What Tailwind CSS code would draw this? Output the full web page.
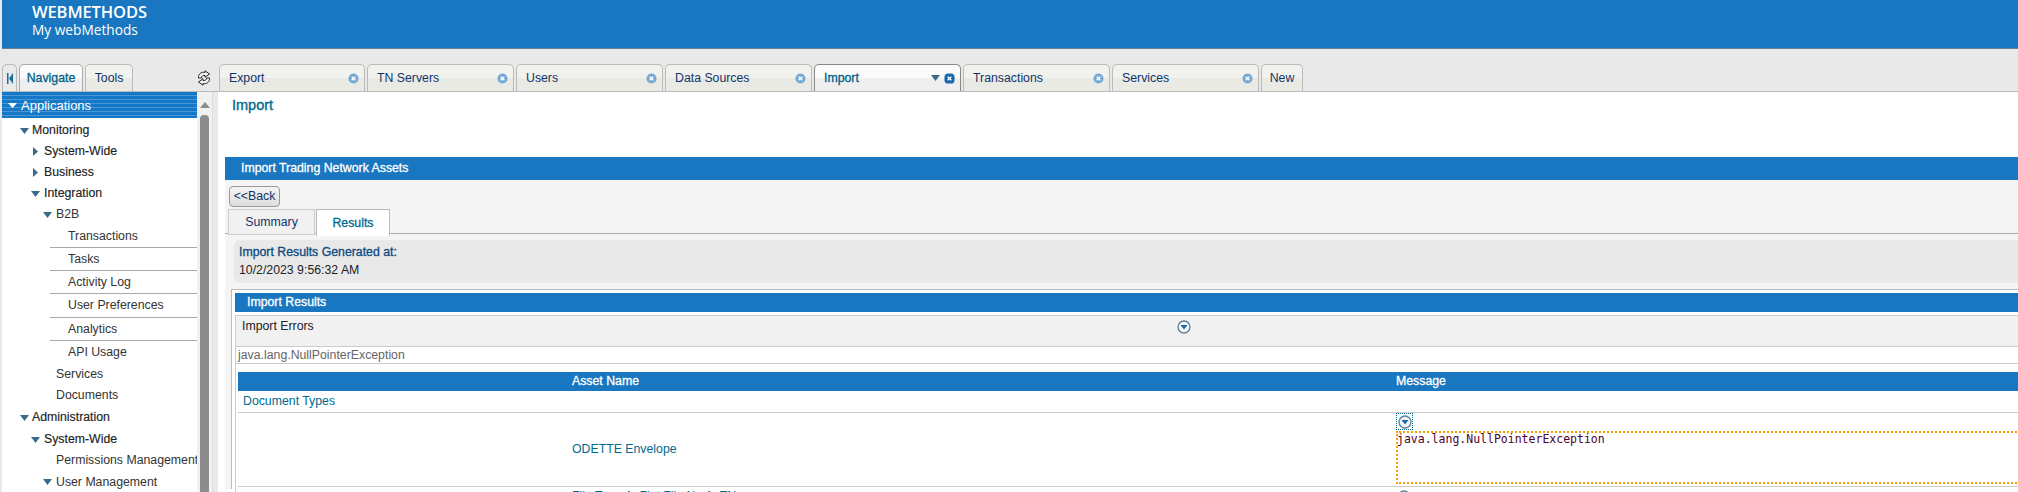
<!DOCTYPE html>
<html>
<head>
<meta charset="utf-8">
<script src="https://cdn.jsdelivr.net/npm/@tailwindcss/browser@4"></script>
</head>
<body class="w-[2018px] h-[492px] overflow-hidden bg-[#e9e9e9] font-['Liberation_Sans',Arial,sans-serif] text-[12.3px] leading-none text-[#222]">
<header class="h-[49px] ml-[2px] bg-[#1976c0] border-b border-[#6c7f8f] pl-[30px] pt-[3px] text-white font-['Open_Sans',sans-serif]">
  <div class="text-[16.5px] font-semibold leading-[18px] tracking-[-0.1px]">WEBMETHODS</div>
  <div class="text-[13.7px] leading-[17px]">My webMethods</div>
</header>
<div class="flex h-[443px] pt-[15px] pl-[2px]">
  <aside class="w-[216px] shrink-0 flex flex-col">
    <div class="flex h-[27px] gap-[2px]">
      <div class="w-[15px] border border-b-0 border-[#bbb] rounded-t-[5px] flex items-center justify-center"><svg width="6" height="11" viewBox="0 0 6 11"><rect width="1.500" height="11" fill="#1b6d96"/><path d="M6 0V11L2 5.500Z" fill="#1b6d96"/></svg></div>
      <div class="w-[64px] border border-b-0 border-[#aaa] rounded-t-[5px] bg-[linear-gradient(#fbfbfb_50%,#efefef_50%)] flex items-center justify-center text-[#005f85] [-webkit-text-stroke:0.3px]">Navigate</div>
      <div class="w-[48px] border border-b-0 border-[#bbb] rounded-t-[5px] bg-[linear-gradient(#f1f2ed_50%,#e9eae3_50%)] flex items-center justify-center text-[#11346b]">Tools</div>
      <div class="ml-[62px] self-center"><svg width="14" height="16" viewBox="0 0 14 16" fill="#f4f4f4" stroke="#222" stroke-width="1"><path d="M1.500 8C1 4 4.500 1.500 8 2.500V.8L12.500 4 8 7.200V5.500C6 5 4.500 6 4.500 8Z"/><path d="M12.500 8C13 12 9.500 14.500 6 13.500V15.200L1.500 12 6 8.800V10.500C8 11 9.500 10 9.500 8Z"/></svg></div>
    </div>
    <div class="flex h-[401px] overflow-hidden border-t border-[#bbb]">
      <div class="w-[195px] bg-white">
        <div class="h-[26px] flex items-center bg-[#1378c8] bg-[repeating-linear-gradient(to_bottom,#1378c8_0,#1378c8_3px,#4c95d2_3px,#4c95d2_4px)] text-white pl-[6px] gap-[4px]"><svg width="9" height="5" viewBox="0 0 9 5"><path d="M0 0H9L4.500 5Z" fill="#fff"/></svg><span class="text-[13px]">Applications</span></div>
        <div class="pt-[2px] text-[#333]">
          <div class="h-[21px] flex items-center pl-[18px] gap-[3px] text-[#222] [-webkit-text-stroke:0.15px]"><svg width="9" height="6" viewBox="0 0 9 6"><path d="M0 0H9L4.500 6Z" fill="#3b6b8a"/></svg><span>Monitoring</span></div>
          <div class="h-[21px] flex items-center pl-[31px] gap-[6px] text-[#222] [-webkit-text-stroke:0.15px]"><svg width="5" height="9" viewBox="0 0 5 9"><path d="M0 0V9L5 4.500Z" fill="#3b6b8a"/></svg><span>System-Wide</span></div>
          <div class="h-[21px] flex items-center pl-[31px] gap-[6px] text-[#222] [-webkit-text-stroke:0.15px]"><svg width="5" height="9" viewBox="0 0 5 9"><path d="M0 0V9L5 4.500Z" fill="#3b6b8a"/></svg><span>Business</span></div>
          <div class="h-[21px] flex items-center pl-[29px] gap-[4px] text-[#222] [-webkit-text-stroke:0.15px]"><svg width="9" height="6" viewBox="0 0 9 6"><path d="M0 0H9L4.500 6Z" fill="#3b6b8a"/></svg><span>Integration</span></div>
          <div class="h-[21px] flex items-center pl-[41px] gap-[4px]"><svg width="9" height="6" viewBox="0 0 9 6"><path d="M0 0H9L4.500 6Z" fill="#3b6b8a"/></svg><span>B2B</span></div>
          <div class="ml-[48px]">
            <div class="h-[23px] flex items-center pl-[18px] border-b border-[#aaa]">Transactions</div>
            <div class="h-[23px] flex items-center pl-[18px] border-b border-[#aaa]">Tasks</div>
            <div class="h-[23px] flex items-center pl-[18px] border-b border-[#aaa]">Activity Log</div>
            <div class="h-[24px] flex items-center pl-[18px] border-b border-[#aaa]">User Preferences</div>
            <div class="h-[23px] flex items-center pl-[18px] border-b border-[#aaa]">Analytics</div>
            <div class="h-[23px] flex items-center pl-[18px]">API Usage</div>
          </div>
          <div class="h-[21px] flex items-center pl-[54px]">Services</div>
          <div class="h-[21px] flex items-center pl-[54px]">Documents</div>
          <div class="h-[23px] flex items-center pl-[18px] gap-[3px] text-[#222] [-webkit-text-stroke:0.15px]"><svg width="9" height="6" viewBox="0 0 9 6"><path d="M0 0H9L4.500 6Z" fill="#3b6b8a"/></svg><span>Administration</span></div>
          <div class="h-[21px] flex items-center pl-[29px] gap-[4px] text-[#222] [-webkit-text-stroke:0.15px]"><svg width="9" height="6" viewBox="0 0 9 6"><path d="M0 0H9L4.500 6Z" fill="#3b6b8a"/></svg><span>System-Wide</span></div>
          <div class="h-[21px] flex items-center pl-[54px] whitespace-nowrap">Permissions Management</div>
          <div class="h-[22px] flex items-center pl-[41px] gap-[4px]"><svg width="9" height="6" viewBox="0 0 9 6"><path d="M0 0H9L4.500 6Z" fill="#3b6b8a"/></svg><span>User Management</span></div>
        </div>
      </div>
      <div class="w-[15px] bg-[#f1f1f1] pt-[10px] flex flex-col items-center">
        <svg width="10" height="6" viewBox="0 0 10 6"><path d="M5 0L10 6H0Z" fill="#8c8c8c"/></svg>
        <div class="w-[9px] flex-1 mt-[7px] bg-[#8c8c8c] rounded-t-[4px] -ml-[1px]"></div>
      </div>
      <div class="w-[5px] border-l border-[#dcdcdc]"></div>
    </div>
  </aside>
  <main class="flex-1 min-w-0 flex flex-col">
    <div class="flex h-[27px] pl-[1px] gap-[2px] text-[#11346b]">
      <div class="w-[146px] shrink-0 border border-b-0 border-[#bbb] rounded-t-[5px] bg-[linear-gradient(#f1f2ed_50%,#e9eae3_50%)] flex items-center justify-between pl-[9px] pr-[5px]"><span>Export</span><svg width="11" height="11" viewBox="0 0 12 12"><circle cx="6" cy="6" r="5.500" fill="#74a9d4"/><path d="M4 4L8 8M8 4L4 8" stroke="#fff" stroke-width="1.500"/></svg></div>
      <div class="w-[147px] shrink-0 border border-b-0 border-[#bbb] rounded-t-[5px] bg-[linear-gradient(#f1f2ed_50%,#e9eae3_50%)] flex items-center justify-between pl-[9px] pr-[5px]"><span>TN Servers</span><svg width="11" height="11" viewBox="0 0 12 12"><circle cx="6" cy="6" r="5.500" fill="#74a9d4"/><path d="M4 4L8 8M8 4L4 8" stroke="#fff" stroke-width="1.500"/></svg></div>
      <div class="w-[147px] shrink-0 border border-b-0 border-[#bbb] rounded-t-[5px] bg-[linear-gradient(#f1f2ed_50%,#e9eae3_50%)] flex items-center justify-between pl-[9px] pr-[5px]"><span>Users</span><svg width="11" height="11" viewBox="0 0 12 12"><circle cx="6" cy="6" r="5.500" fill="#74a9d4"/><path d="M4 4L8 8M8 4L4 8" stroke="#fff" stroke-width="1.500"/></svg></div>
      <div class="w-[147px] shrink-0 border border-b-0 border-[#bbb] rounded-t-[5px] bg-[linear-gradient(#f1f2ed_50%,#e9eae3_50%)] flex items-center justify-between pl-[9px] pr-[5px]"><span>Data Sources</span><svg width="11" height="11" viewBox="0 0 12 12"><circle cx="6" cy="6" r="5.500" fill="#74a9d4"/><path d="M4 4L8 8M8 4L4 8" stroke="#fff" stroke-width="1.500"/></svg></div>
      <div class="w-[147px] shrink-0 border border-b-0 border-[#888] rounded-t-[5px] bg-[linear-gradient(#fbfbfb_50%,#efefef_50%)] flex items-center pl-[9px] pr-[5px] text-[#005f85] [-webkit-text-stroke:0.3px]"><span class="flex-1">Import</span><svg width="9" height="6" viewBox="0 0 9 6" class="mr-[4px]"><path d="M0 0H9L4.500 6Z" fill="#3b6b8a"/></svg><svg width="11" height="11" viewBox="0 0 12 12"><rect x=".5" y=".5" width="11" height="11" rx="4" fill="#1568b0"/><path d="M4 4L8 8M8 4L4 8" stroke="#fff" stroke-width="1.500"/></svg></div>
      <div class="w-[147px] shrink-0 border border-b-0 border-[#bbb] rounded-t-[5px] bg-[linear-gradient(#f1f2ed_50%,#e9eae3_50%)] flex items-center justify-between pl-[9px] pr-[5px]"><span>Transactions</span><svg width="11" height="11" viewBox="0 0 12 12"><circle cx="6" cy="6" r="5.500" fill="#74a9d4"/><path d="M4 4L8 8M8 4L4 8" stroke="#fff" stroke-width="1.500"/></svg></div>
      <div class="w-[147px] shrink-0 border border-b-0 border-[#bbb] rounded-t-[5px] bg-[linear-gradient(#f1f2ed_50%,#e9eae3_50%)] flex items-center justify-between pl-[9px] pr-[5px]"><span>Services</span><svg width="11" height="11" viewBox="0 0 12 12"><circle cx="6" cy="6" r="5.500" fill="#74a9d4"/><path d="M4 4L8 8M8 4L4 8" stroke="#fff" stroke-width="1.500"/></svg></div>
      <div class="w-[42px] shrink-0 border border-b-0 border-[#bbb] rounded-t-[5px] bg-[linear-gradient(#f1f2ed_50%,#e9eae3_50%)] flex items-center justify-center">New</div>
    </div>
    <div class="flex-1 bg-white border-t border-[#bbb] overflow-hidden pl-[7px]">
      <div class="h-[65px] pl-[7px] pt-[6px] text-[14.5px] text-[#006b8f] [-webkit-text-stroke:0.35px]">Import</div>
      <section class="bg-[#f4f4f4]">
        <div class="h-[23px] bg-[#1976c0] flex items-center pl-[16px] text-white [-webkit-text-stroke:0.3px] pb-[1px]">Import Trading Network Assets</div>
        <div class="h-[54px] pt-[6px] pl-[3px] border-b border-[#aaa]">
          <button class="block ml-[1px] w-[51px] h-[21px] border border-[#999] rounded-[4px] bg-[linear-gradient(#f4f4f4,#dedede)] text-[#11346b] text-center">&lt;&lt;Back</button>
          <div class="flex mt-[2px] gap-[1px]">
            <div class="w-[87px] h-[26px] border border-[#ccc] bg-[#f1f1f1] flex items-center justify-center text-[#11346b]">Summary</div>
            <div class="w-[74px] h-[27px] border border-b-0 border-[#bbb] bg-white flex items-center justify-center text-[#006b8f] [-webkit-text-stroke:0.3px]">Results</div>
          </div>
        </div>
        <div class="pt-[6px] pl-[9px] pb-[6px]">
          <div class="h-[43px] bg-[#e9e9e9] rounded-l-[6px] pl-[5px] pt-[6px]">
            <div class="text-[#0b4a80] [-webkit-text-stroke:0.3px]">Import Results Generated at:</div>
            <div class="mt-[6px] text-[#222]">10/2/2023 9:56:32 AM</div>
          </div>
        </div>
        <div class="ml-[6px] border-l border-t border-[#bbb] bg-white pl-[3px] pt-[3px] h-[200px]">
          <div class="h-[19px] bg-[#1976c0] flex items-center pl-[12px] text-white [-webkit-text-stroke:0.3px]">Import Results</div>
          <div class="h-[4px] border-b border-[#ccc]"></div>
          <div class="border-l border-[#ccc]">
            <div class="h-[31px] bg-[#f1f1f1] border-b border-[#ccc] flex pl-[6px] pt-[4px]">
              <span class="w-[935px]">Import Errors</span>
              <svg width="14" height="14" viewBox="0 0 14 14"><circle cx="7" cy="7" r="6" fill="#f4f7fa" stroke="#5b7f99" stroke-width="1.300"/><path d="M3.500 5H10.500L7 9.500Z" fill="#1b6aa5"/></svg>
            </div>
            <div class="h-[17px] border-b border-[#ccc] flex items-center pl-[2px] text-[#666]">java.lang.NullPointerException</div>
            <div class="h-[8px]"></div>
            <div class="ml-[2px]">
              <div class="h-[19px] bg-[#1976c0] text-white [-webkit-text-stroke:0.3px] grid grid-cols-[334px_824px_1fr] items-center"><span></span><span>Asset Name</span><span>Message</span></div>
              <div class="h-[22px] border-b border-[#ccc] flex items-center pl-[5px] text-[#006b8f]">Document Types</div>
              <div class="h-[74px] border-b border-[#ccc] grid grid-cols-[334px_824px_1fr] overflow-hidden">
                <span></span>
                <span class="self-center text-[#006b8f]">ODETTE Envelope</span>
                <div class="flex flex-col">
                  <div class="w-[17px] h-[17px] border border-dotted border-[#006b8f] flex items-center justify-center"><svg width="14" height="14" viewBox="0 0 14 14"><circle cx="7" cy="7" r="6" fill="#f4f7fa" stroke="#5b7f99" stroke-width="1.300"/><path d="M3.500 5H10.500L7 9.500Z" fill="#1b6aa5"/></svg></div>
                  <div class="mt-[1px] h-[53px] w-[800px] border-2 border-dotted border-[#f5a000] font-['DejaVu_Sans_Mono',monospace] text-[11.500px] leading-[12px] text-[#4b0030]"><div class="-ml-[1px]">java.lang.NullPointerException</div></div>
                </div>
              </div>
              <div class="h-[20px] grid grid-cols-[334px_824px_1fr] pt-[3px]">
                <span></span>
                <span class="text-[#006b8f] whitespace-nowrap">File Type A: Flat File No A: TN</span>
                <svg width="14" height="14" viewBox="0 0 14 14" class="ml-[1px]"><circle cx="7" cy="7" r="6" fill="#f4f7fa" stroke="#5b7f99" stroke-width="1.300"/><path d="M3.500 5H10.500L7 9.500Z" fill="#1b6aa5"/></svg>
              </div>
            </div>
          </div>
        </div>
      </section>
    </div>
  </main>
</div>
</body>
</html>
